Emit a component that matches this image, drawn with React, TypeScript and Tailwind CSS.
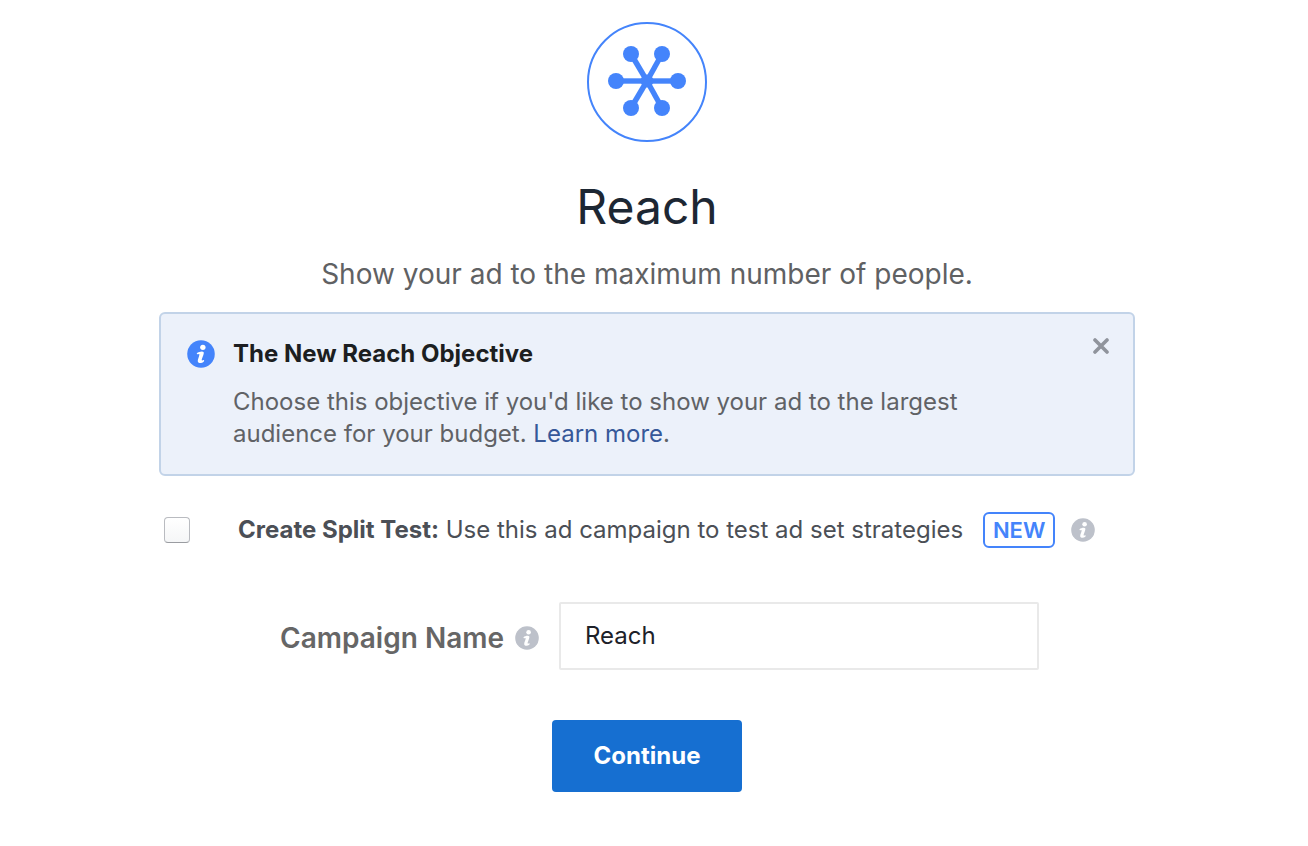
import { useState } from "react";

const spokes = [
  { x: 9, y: 37 },
  { x: 71, y: 37 },
  { x: 24, y: 10 },
  { x: 55, y: 10 },
  { x: 24, y: 64 },
  { x: 55, y: 64 },
];

function ReachIcon() {
  return (
    <svg viewBox="0 0 80 76" className="h-[76px] w-20" aria-hidden="true">
      <g stroke="#4484fb" strokeWidth="5.4">
        {spokes.map((spoke) => (
          <line key={`${spoke.x}-${spoke.y}`} x1="40" y1="37" x2={spoke.x} y2={spoke.y} />
        ))}
      </g>
      <g fill="#4484fb">
        <circle cx="40" cy="37" r="6.5" />
        {spokes.map((spoke) => (
          <circle key={`${spoke.x}-${spoke.y}`} cx={spoke.x} cy={spoke.y} r="8" />
        ))}
      </g>
    </svg>
  );
}

function InfoIcon({ className }: { className: string }) {
  return (
    <svg viewBox="0 0 24 24" className={`shrink-0 ${className}`} aria-hidden="true">
      <circle cx="12" cy="12" r="11.8" fill="currentColor" />
      <circle cx="13.6" cy="6.3" r="2.3" fill="#fff" />
      <path
        d="M8.6 11.2C9.8 10 13.6 9.2 14.3 10.4C14.9 11.6 12.7 15.6 12.6 17.2C12.7 18 13.6 17.3 14.3 17.2C15 17.4 14.7 18.4 14 18.9C12.6 20 9.6 20.3 9.2 18.2C9 16.6 10.8 13.8 10.6 12.2C10.2 11.7 9.4 12.4 8.9 12.3C8.4 12.1 8.3 11.6 8.6 11.2Z"
        fill="#fff"
      />
    </svg>
  );
}

function Notice({ onClose }: { onClose: () => void }) {
  return (
    <section className="mt-5 flex items-start rounded-md border-2 border-[#c2d3e8] bg-[#ecf1fa] py-6 pr-6 pl-[26px]">
      <InfoIcon className="mt-0.5 h-7 w-7 text-[#4484fb]" />
      <div className="ml-[18px] flex-1">
        <h2 className="text-2xl leading-8 font-bold text-[#1c1e21]">The New Reach Objective</h2>
        <p className="mt-4 max-w-[760px] text-2xl leading-8 text-[#606266]">
          Choose this objective if you'd like to show your ad to the largest audience for your budget.{" "}
          <a href="#learn-more" className="text-[#365899]">
            Learn more
          </a>
          .
        </p>
      </div>
      <button type="button" aria-label="Close" onClick={onClose} className="text-[#90949c]">
        <svg viewBox="0 0 16 16" className="h-4 w-4" aria-hidden="true">
          <path d="M2 2L14 14M14 2L2 14" stroke="currentColor" strokeWidth="3.6" strokeLinecap="round" />
        </svg>
      </button>
    </section>
  );
}

export default function App() {
  const [showNotice, setShowNotice] = useState(true);
  const [splitTest, setSplitTest] = useState(false);
  const [name, setName] = useState("Reach");

  return (
    <main className="min-h-screen bg-white pt-[22px] pr-[14px] pb-12 font-['Inter',sans-serif]">
      <div className="mx-auto max-w-[976px]">
        <header className="flex flex-col items-center text-center">
          <div className="flex h-[120px] w-[120px] items-center justify-center rounded-full border-2 border-[#4484fb]">
            <ReachIcon />
          </div>
          <h1 className="mt-9 text-5xl leading-[58px] text-[#1d2733]">Reach</h1>
          <p className="mt-5 text-[28px] leading-9 text-[#5f6163]">
            Show your ad to the maximum number of people.
          </p>
        </header>

        {showNotice && <Notice onClose={() => setShowNotice(false)} />}

        <form onSubmit={(event) => event.preventDefault()}>
          <div className="mt-9 flex items-center pl-[5px]">
            <input
              id="split-test"
              type="checkbox"
              checked={splitTest}
              onChange={(event) => setSplitTest(event.target.checked)}
              className="h-[26px] w-[26px] shrink-0 appearance-none rounded border border-[#b9bbc0] border-b-[#9a9ca1] bg-gradient-to-b from-white to-[#f5f6f7] checked:bg-[#4484fb]"
            />
            <label htmlFor="split-test" className="ml-12 text-2xl leading-8 text-[#4b4f56]">
              <span className="font-bold">Create Split Test:</span> Use this ad campaign to test ad set strategies
            </label>
            <span className="ml-5 flex h-9 w-[72px] shrink-0 items-center justify-center rounded-md border-2 border-[#4484fb] text-[22px] leading-8 font-semibold text-[#4484fb]">
              NEW
            </span>
            <InfoIcon className="ml-4 h-6 w-6 text-[#bdc1ca]" />
          </div>

          <div className="mt-[54px] flex items-center justify-end pr-24">
            <div className="flex items-center pt-1">
              <label htmlFor="campaign-name" className="text-[28px] leading-9 font-semibold text-[#666666]">
                Campaign Name
              </label>
              <InfoIcon className="ml-[11px] h-6 w-6 text-[#bdc1ca]" />
            </div>
            <input
              id="campaign-name"
              type="text"
              value={name}
              onChange={(event) => setName(event.target.value)}
              className="ml-5 h-[68px] w-[480px] rounded-xs border-2 border-[#e9e9e9] bg-white px-6 pb-0.5 text-2xl text-[#1d2129] outline-none focus:border-[#4484fb]"
            />
          </div>

          <div className="mt-[50px] flex justify-center">
            <button
              type="submit"
              className="h-[72px] w-[190px] rounded bg-[#166fd1] text-2xl font-bold text-white hover:bg-[#1262b8]"
            >
              Continue
            </button>
          </div>
        </form>
      </div>
    </main>
  );
}
